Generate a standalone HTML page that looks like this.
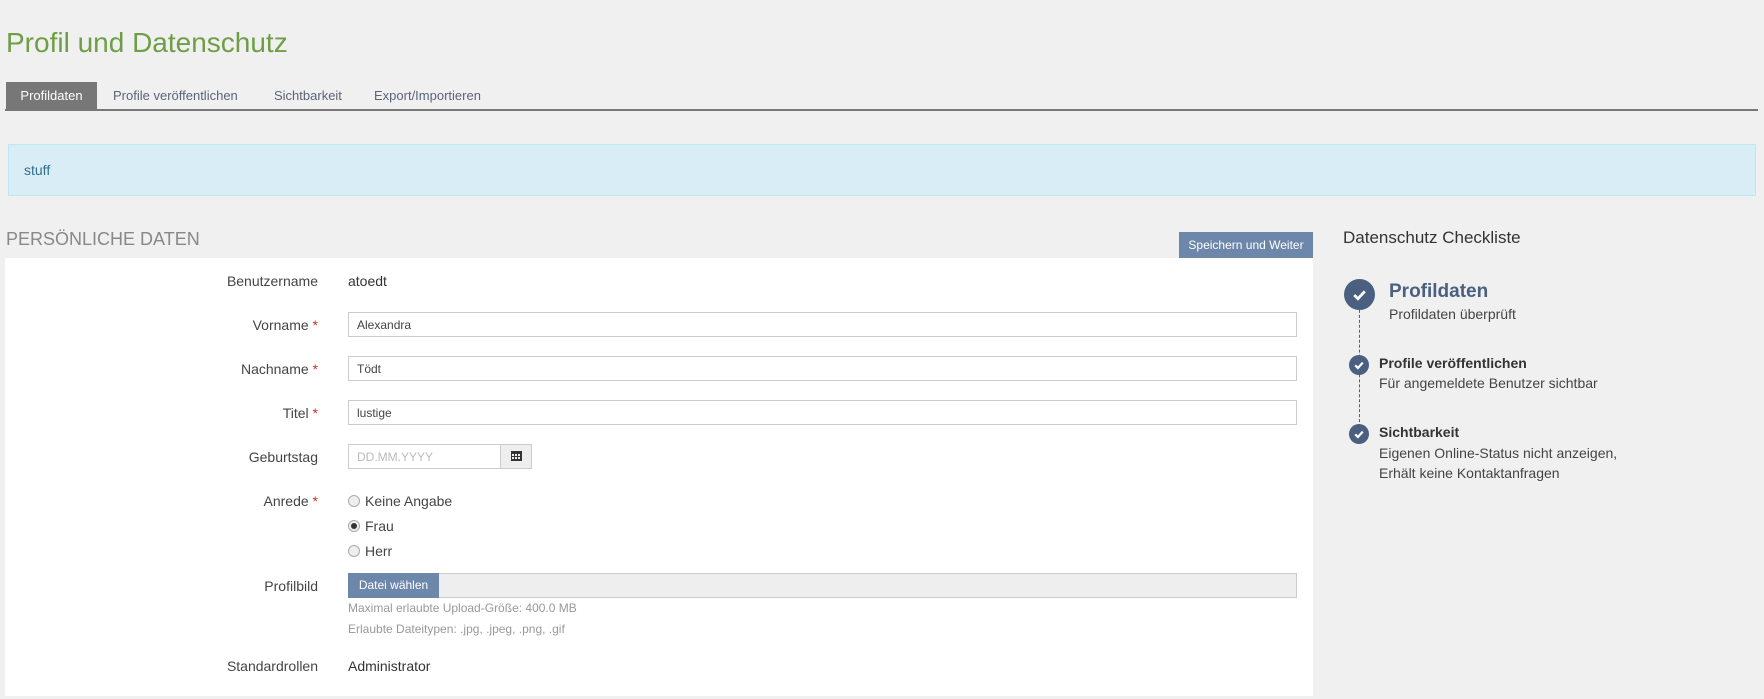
<!DOCTYPE html>
<html><head><meta charset="utf-8"><style>
*{box-sizing:border-box;margin:0;padding:0}
body{width:1764px;height:699px;background:#f0f0f0;font-family:"Liberation Sans",sans-serif;color:#333;position:relative;overflow:hidden}
.a{position:absolute;white-space:nowrap}
h1{position:absolute;left:6px;top:27px;font-size:28px;font-weight:normal;color:#6e9e45}
.tab{position:absolute;top:82px;height:28px;line-height:28px;font-size:13px;color:#5a6478}
.ul{position:absolute;left:5px;right:6px;top:109px;height:2px;background:#777}
.info{position:absolute;left:8px;right:8px;top:144px;height:52px;background:#d9edf7;border:1px solid #bce8f1;color:#31708f;font-size:14px;padding:17px 15px}
.panel{position:absolute;left:5px;top:258px;width:1308px;height:438px;background:#fff}
.lbl{position:absolute;right:calc(1764px - 318px);font-size:14px;color:#444;text-align:right;transform:translateY(-50%)}
.req{color:#c9302c}
.inp{position:absolute;left:348px;width:949px;height:25px;border:1px solid #ccc;background:#fff;font-size:12px;padding:5px 8px;color:#444}
.val{position:absolute;left:348px;font-size:14px;color:#333;transform:translateY(-50%)}
.radio{position:absolute;left:348px;font-size:14px;color:#444;transform:translateY(-50%)}
.radio i{display:inline-block;width:12px;height:12px;border:1px solid #aaa;border-radius:50%;background:#eee;vertical-align:-1px;margin-right:5px;position:relative}
.radio i.on:after{content:"";position:absolute;left:2px;top:2px;width:6px;height:6px;border-radius:50%;background:#333}
.circ{position:absolute;border-radius:50%;background:#4b5f80}
</style></head><body>
<h1>Profil und Datenschutz</h1>
<div class="tab" style="left:6px;width:91px;background:#777;color:#fff;text-align:center">Profildaten</div>
<div class="tab" style="left:113px">Profile veröffentlichen</div>
<div class="tab" style="left:274px">Sichtbarkeit</div>
<div class="tab" style="left:374px">Export/Importieren</div>
<div class="ul"></div>
<div class="info">stuff</div>
<div class="a" style="left:6px;top:229px;font-size:18px;color:#888">PERSÖNLICHE DATEN</div>
<div class="a" style="left:1179px;top:232px;width:134px;height:26px;background:#6d87ab;color:#fff;font-size:12px;line-height:26px;text-align:center">Speichern und Weiter</div>
<div class="panel"></div>
<div class="lbl" style="top:281px">Benutzername</div><div class="val" style="top:281px">atoedt</div>
<div class="lbl" style="top:325px">Vorname <span class="req">*</span></div><div class="inp" style="top:312px">Alexandra</div>
<div class="lbl" style="top:369px">Nachname <span class="req">*</span></div><div class="inp" style="top:356px">Tödt</div>
<div class="lbl" style="top:413px">Titel <span class="req">*</span></div><div class="inp" style="top:400px">lustige</div>
<div class="lbl" style="top:457px">Geburtstag</div>
<div class="inp" style="top:444px;width:153px;color:#bbb">DD.MM.YYYY</div>
<div class="a" style="left:500px;top:444px;width:32px;height:25px;background:#eee;border:1px solid #ccc">
<svg width="30" height="23" viewBox="0 0 30 23"><rect x="10" y="6" width="11" height="10" fill="#333"/><g fill="#eee"><rect x="11" y="9" width="2" height="2"/><rect x="14" y="9" width="2" height="2"/><rect x="17" y="9" width="2" height="2"/><rect x="11" y="12" width="2" height="2"/><rect x="14" y="12" width="2" height="2"/><rect x="17" y="12" width="2" height="2"/></g></svg></div>
<div class="lbl" style="top:501px">Anrede <span class="req">*</span></div>
<div class="radio" style="top:501px"><i></i>Keine Angabe</div>
<div class="radio" style="top:526px"><i class="on"></i>Frau</div>
<div class="radio" style="top:551px"><i></i>Herr</div>
<div class="lbl" style="top:586px">Profilbild</div>
<div class="a" style="left:348px;top:573px;width:949px;height:25px;background:#eee;border:1px solid #ccc"></div>
<div class="a" style="left:348px;top:573px;width:91px;height:25px;background:#6d87ab;color:#fff;font-size:12px;line-height:25px;text-align:center">Datei wählen</div>
<div class="a" style="left:348px;top:601px;font-size:12px;color:#999">Maximal erlaubte Upload-Größe: 400.0 MB</div>
<div class="a" style="left:348px;top:622px;font-size:12px;color:#999">Erlaubte Dateitypen: .jpg, .jpeg, .png, .gif</div>
<div class="lbl" style="top:666px">Standardrollen</div><div class="val" style="top:666px">Administrator</div>

<div class="a" style="left:1343px;top:228px;font-size:17px;color:#333">Datenschutz Checkliste</div>
<div class="a" style="left:1359px;top:300px;height:132px;border-left:1px dashed #4b5f80"></div>
<div class="circ" style="left:1344px;top:279px;width:31px;height:31px"></div>
<svg class="a" style="left:1350px;top:285px" width="19" height="19" viewBox="0 0 18 18"><path d="M4 9.5l3.5 3.5 6.5-7" stroke="#fff" stroke-width="2.6" fill="none"/></svg>
<div class="a" style="left:1389px;top:281px;font-size:19px;font-weight:bold;color:#4b5f80">Profildaten</div>
<div class="a" style="left:1389px;top:306px;font-size:14px;color:#444">Profildaten überprüft</div>
<div class="circ" style="left:1349px;top:355px;width:20px;height:20px"></div>
<svg class="a" style="left:1352px;top:358px" width="14" height="14" viewBox="0 0 13 13"><path d="M3 6.8l2.5 2.5 4.5-5" stroke="#fff" stroke-width="2" fill="none"/></svg>
<div class="a" style="left:1379px;top:355px;font-size:14px;font-weight:bold;color:#333">Profile veröffentlichen</div>
<div class="a" style="left:1379px;top:375px;font-size:14px;color:#444">Für angemeldete Benutzer sichtbar</div>
<div class="circ" style="left:1349px;top:424px;width:20px;height:20px"></div>
<svg class="a" style="left:1352px;top:427px" width="14" height="14" viewBox="0 0 13 13"><path d="M3 6.8l2.5 2.5 4.5-5" stroke="#fff" stroke-width="2" fill="none"/></svg>
<div class="a" style="left:1379px;top:424px;font-size:14px;font-weight:bold;color:#333">Sichtbarkeit</div>
<div class="a" style="left:1379px;top:445px;font-size:14px;color:#444">Eigenen Online-Status nicht anzeigen,</div>
<div class="a" style="left:1379px;top:465px;font-size:14px;color:#444">Erhält keine Kontaktanfragen</div>
</body></html>
